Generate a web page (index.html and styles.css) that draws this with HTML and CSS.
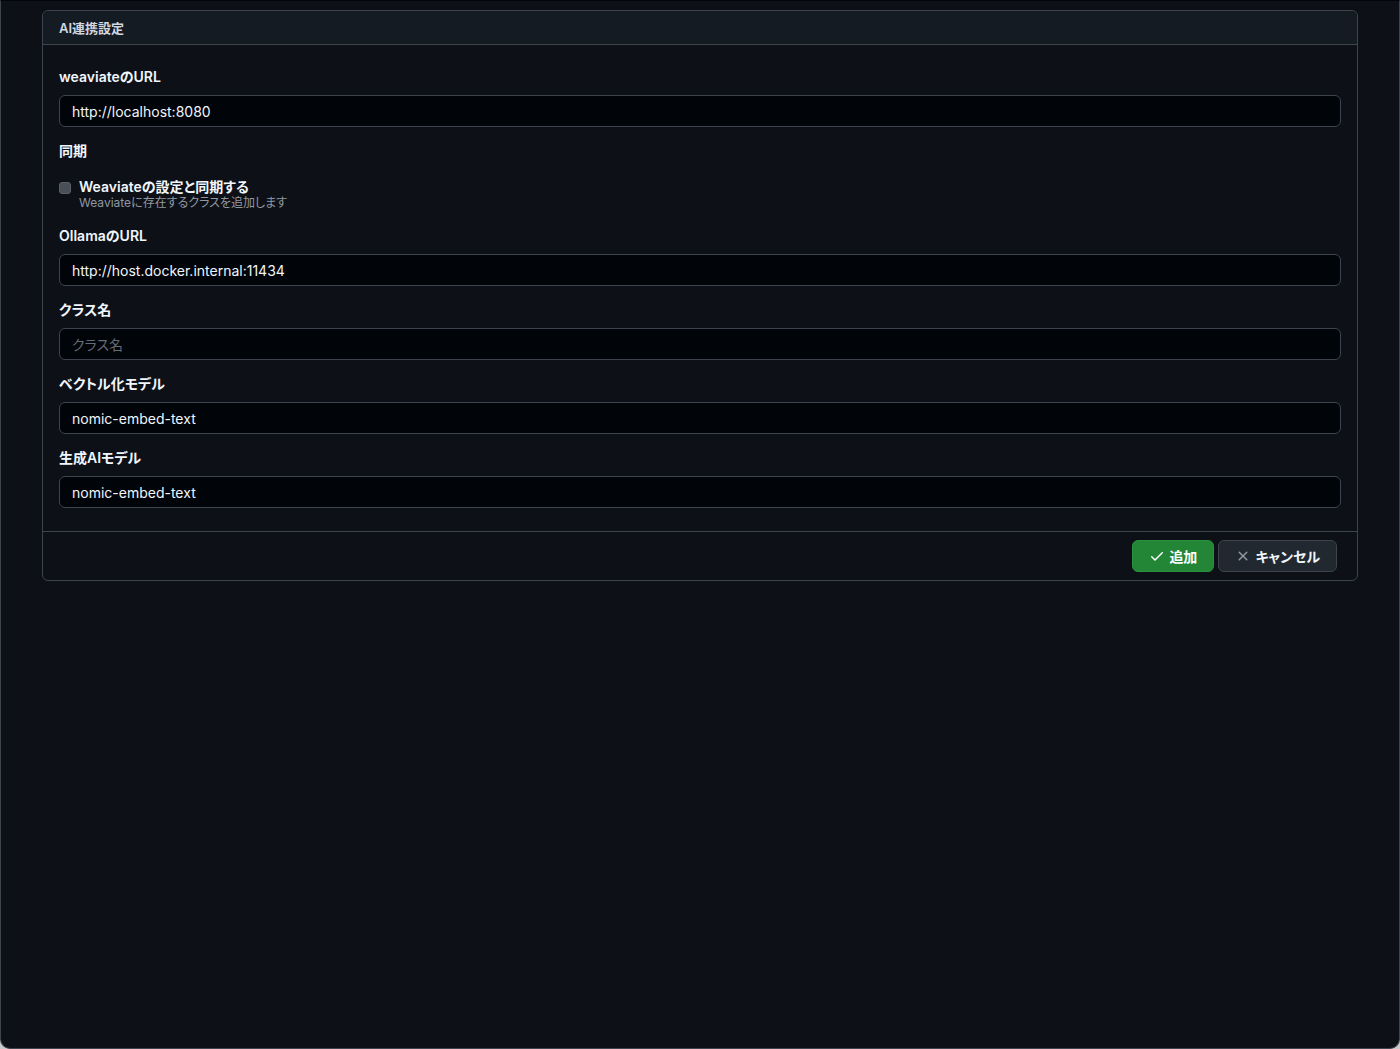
FILE: index.html
```html
<!DOCTYPE html>
<html lang="ja">
<head>
    <meta charset="UTF-8">
    <meta name="viewport" content="width=device-width, initial-scale=1.0">
    <title>AI連携設定</title>
    <link rel="stylesheet" href="styles.css">
</head>
<body>
    <div class="window">
        <div class="box">
            <div class="box-header">AI連携設定</div>

            <div class="box-body">
                <div class="form-group">
                    <label for="weaviate-url">weaviateのURL</label>
                    <input type="text" id="weaviate-url" value="http://localhost:8080">
                </div>

                <div class="form-group">
                    <label>同期</label>
                    <div class="form-checkbox">
                        <input type="checkbox" id="sync">
                        <div>
                            <label for="sync" class="check-title">Weaviateの設定と同期する</label>
                            <div class="note">Weaviateに存在するクラスを追加します</div>
                        </div>
                    </div>
                </div>

                <div class="form-group">
                    <label for="ollama-url">OllamaのURL</label>
                    <input type="text" id="ollama-url" value="http://host.docker.internal:11434">
                </div>

                <div class="form-group">
                    <label for="class-name">クラス名</label>
                    <input type="text" id="class-name" placeholder="クラス名">
                </div>

                <div class="form-group">
                    <label for="vector-model">ベクトル化モデル</label>
                    <input type="text" id="vector-model" value="nomic-embed-text">
                </div>

                <div class="form-group">
                    <label for="gen-model">生成AIモデル</label>
                    <input type="text" id="gen-model" value="nomic-embed-text">
                </div>
            </div>

            <div class="box-footer">
                <button class="btn btn-primary">
                    <svg width="16" height="16" viewBox="0 0 16 16"><path d="M13.78 4.22a.75.75 0 0 1 0 1.06l-7.25 7.25a.75.75 0 0 1-1.06 0L2.22 9.28a.75.75 0 0 1 1.06-1.06L6 10.94l6.72-6.72a.75.75 0 0 1 1.06 0Z"/></svg>
                    追加
                </button>
                <button class="btn">
                    <svg class="muted" width="16" height="16" viewBox="0 0 16 16"><path d="M3.72 3.72a.75.75 0 0 1 1.06 0L8 6.94l3.22-3.220a.75.75 0 1 1 1.06 1.06L9.06 8l3.22 3.22a.75.75 0 1 1-1.06 1.06L8 9.06l-3.22 3.22a.75.75 0 0 1-1.06-1.06L6.94 8 3.720 4.78a.75.75 0 0 1 0-1.06Z"/></svg>
                    キャンセル
                </button>
            </div>
        </div>
    </div>
</body>
</html>
```

FILE: styles.css
```css
html, body {
    margin: 0;
    height: 100%;
}

body {
    background-color: #c9c9c9;
    font-family: 'Inter', 'Noto Sans CJK JP', sans-serif;
    font-size: 14px;
    line-height: 20px;
    font-feature-settings: "palt";
    color: #f0f6fc;
}

.window {
    box-sizing: border-box;
    height: 100%;
    padding: 9px 41px;
    background-color: #0d1117;
    border: 1px solid #3d444d;
    border-top-color: #010409;
    border-radius: 0 0 10px 10px;
}

.box {
    border: 1px solid #3d444d;
    border-radius: 6px;
}

.box-header {
    padding: 7px 16px 6px;
    background-color: #151b23;
    border-bottom: 1px solid #3d444d;
    border-radius: 6px 6px 0 0;
    font-size: 13px;
    font-weight: 600;
    color: #d1d7e0;
}

.box-body {
    display: flex;
    flex-direction: column;
    gap: 14px;
    padding: 22px 16px 23px;
}

.form-group label {
    display: block;
    margin-bottom: 8px;
    font-weight: 600;
}

.form-group input[type="text"] {
    display: block;
    box-sizing: border-box;
    width: 100%;
    height: 32px;
    padding: 5px 12px;
    font-family: inherit;
    font-size: 14px;
    font-feature-settings: "palt";
    color: #f0f6fc;
    background-color: #010409;
    border: 1px solid #3d444d;
    border-radius: 6px;
    outline: none;
}

.form-group input::placeholder {
    color: #656c76;
}

.form-checkbox {
    display: flex;
    align-items: flex-start;
    gap: 8px;
    margin-top: 16px;
    margin-bottom: 3px;
}

.form-checkbox input {
    appearance: none;
    width: 12px;
    height: 12px;
    margin: 5px 0 0;
    background-color: #4a4f57;
    border: 1px solid #5a606a;
    border-radius: 3px;
}

.form-checkbox .check-title {
    margin-bottom: 0;
}

.note {
    font-size: 12px;
    line-height: 12px;
    color: #9198a1;
}

.box-footer {
    display: flex;
    justify-content: flex-end;
    gap: 4px;
    padding: 8px 20px;
    border-top: 1px solid #3d444d;
}

.btn {
    display: flex;
    align-items: center;
    gap: 4px;
    height: 32px;
    padding: 0 16px;
    font-family: inherit;
    font-size: 14px;
    font-weight: 600;
    font-feature-settings: "palt";
    color: #f0f6fc;
    background-color: #212830;
    border: 1px solid #3d444d;
    border-radius: 6px;
    cursor: pointer;
}

.btn svg {
    fill: currentColor;
}

.btn svg.muted {
    fill: #9198a1;
}

.btn-primary {
    background-color: #238636;
    border-color: #2a913e;
    color: #ffffff;
}
```
